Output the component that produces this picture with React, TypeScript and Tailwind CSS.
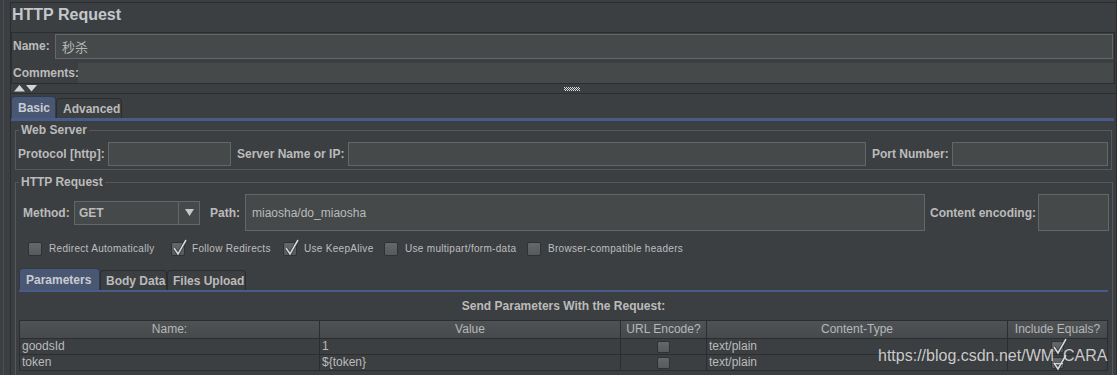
import React from "react";

type BoxProps = {
  checked?: boolean;
  small?: boolean;
};

const CheckBox = ({ checked, small }: BoxProps) => (
  <span
    className={
      small
        ? "relative inline-block h-[12px] w-[13px] shrink-0 rounded-[2px] border border-[#2f3133] bg-linear-to-b from-[#656869] to-[#575a5c]"
        : "relative inline-block h-[14px] w-[14px] shrink-0 rounded-[2px] border border-[#2f3133] bg-linear-to-b from-[#656869] to-[#575a5c]"
    }
  >
    {checked && (
      <svg
        className="absolute left-[-1px] top-[-5px]"
        width="17"
        height="18"
        viewBox="0 0 17 18"
      >
        <path d="M3 10 L7 16 L15 2" fill="none" stroke="#2b2d2f" strokeWidth="3" />
        <path d="M3 10 L7 16 L15 2" fill="none" stroke="#d8d8d8" strokeWidth="1.6" />
      </svg>
    )}
  </span>
);

const Field = ({ className, children }: { className?: string; children?: React.ReactNode }) => (
  <div className={"border border-[#646769] bg-[#45494a] " + (className ?? "")}>{children}</div>
);

const Option = ({ label, checked, width }: { label: string; checked?: boolean; width: string }) => (
  <div className={"flex items-center gap-[7px] " + width}>
    <CheckBox checked={checked} />
    <span className="text-[10px] leading-[14px] tracking-[0.3px] text-[#bcbec0]">{label}</span>
  </div>
);

const columns = ["Name:", "Value", "URL Encode?", "Content-Type", "Include Equals?"];
const rows = [
  { name: "goodsId", value: "1", type: "text/plain" },
  { name: "token", value: "${token}", type: "text/plain" },
];

export default function App() {
  return (
    <div className="relative flex h-[375px] w-[1117px] overflow-hidden bg-[#3c3f41] font-['Liberation_Sans',Arial,sans-serif] text-[#bbbbbb]">
      {/* left gutter */}
      <div className="flex w-[11px] shrink-0">
        <div className="w-[3px]" />
        <div className="w-px bg-[#4c4f51]" />
        <div className="w-[6px]" />
        <div className="mt-[2px] w-px bg-[#2b2d2f]" />
      </div>

      <div className="flex min-w-0 flex-1 flex-col border-r border-[#2b2d2f] [&>*]:shrink-0">
        <div className="mt-[2px] border-t border-[#2b2d2f]" />
        <div className="h-[29px] pl-px pt-[2px] text-[16px] font-bold leading-[20px] text-[#c4c8cc]">
          HTTP Request
        </div>

        {/* name / comments */}
        <div className="mr-px flex h-[52px] flex-col border border-[#2b2d2f]">
          <div className="flex h-[28px] shrink-0 items-start">
            <div className="w-[43px] pl-px pt-[6px] text-[12px] font-bold leading-[14px]">Name:</div>
            <Field className="mr-px mt-px flex h-[25px] flex-1 items-center pl-[6px]">
              <span className="font-['Noto_Sans_CJK_SC',sans-serif] text-[13px] leading-[16px] text-[#b5b5b5]">
                秒杀
              </span>
            </Field>
          </div>
          <div className="flex flex-1 items-stretch pt-[2px]">
            <div className="flex w-[66px] items-center pl-px text-[12px] font-bold leading-[14px]">Comments:</div>
            <div className="mr-px flex-1 bg-[#45494a]" />
          </div>
        </div>

        {/* splitter */}
        <div className="flex h-[10px] items-center border-b border-[#2b2d2f]">
          <svg className="ml-[3px]" width="24" height="7" viewBox="0 0 24 7">
            <polygon points="0,6.5 5.5,0 11,6.5" fill="#d4d4d4" />
            <polygon points="12,0 23,0 17.5,6.5" fill="#d4d4d4" />
          </svg>
          <svg className="ml-[526px]" width="16" height="4" viewBox="0 0 16 4">
            {Array.from({ length: 8 }).map((_, i) => (
              <React.Fragment key={i}>
                <rect x={i * 2} y={0} width="1" height="1" fill="#d8d8d8" />
                <rect x={i * 2 + 1} y={1} width="1" height="1" fill="#d8d8d8" />
                <rect x={i * 2} y={2} width="1" height="1" fill="#d8d8d8" />
                <rect x={i * 2 + 1} y={3} width="1" height="1" fill="#d8d8d8" />
              </React.Fragment>
            ))}
          </svg>
        </div>

        {/* main tabs */}
        <div className="flex h-[24px] items-end">
          <div className="flex h-[22px] w-[45px] items-center rounded-t-[4px] border border-b-0 border-[#2f3a50] bg-[#4a5773] pl-[6px] text-[12px] font-bold leading-[14px] text-[#c8ccd2]">
            Basic
          </div>
          <div className="flex h-[20px] w-[66px] items-center rounded-t-[4px] border border-b-0 border-[#2b2d2f] pl-[6px] text-[12px] font-bold leading-[14px]">
            Advanced
          </div>
        </div>
        <div className="mr-[2px] h-[3px] bg-[#485c88]" />

        {/* web server */}
        <fieldset className="mx-[4px] mt-[2px] border border-[#56595b]">
          <legend className="ml-[3px] px-[2px] text-[12px] font-bold leading-[14px]">Web Server</legend>
          <div className="mt-[5px] mb-[3px] flex h-[24px] items-stretch pl-[2px] pr-[3px]">
            <div className="flex w-[90px] items-center text-[12px] font-bold">Protocol [http]:</div>
            <Field className="w-[123px]" />
            <div className="ml-[6px] flex w-[111px] items-center text-[12px] font-bold">Server Name or IP:</div>
            <Field className="flex-1" />
            <div className="ml-[6px] flex w-[80px] items-center text-[12px] font-bold">Port Number:</div>
            <Field className="w-[156px]" />
          </div>
        </fieldset>

        {/* http request */}
        <fieldset className="mx-[4px] mt-[5px] border border-[#56595b] pb-[30px]">
          <legend className="ml-[3px] px-[2px] text-[12px] font-bold leading-[14px]">HTTP Request</legend>
          <div className="mt-[5px] flex h-[37px] items-center pl-[7px] pr-[3px]">
            <div className="w-[51px] text-[12px] font-bold">Method:</div>
            <Field className="flex h-[24px] w-[126px] items-stretch">
              <div className="flex flex-1 items-center pl-[4px] text-[12px] font-bold">GET</div>
              <div className="flex w-[21px] items-center justify-center border-l border-[#646769]">
                <svg width="9" height="7" viewBox="0 0 9 7">
                  <polygon points="0,0 9,0 4.5,7" fill="#c8c8c8" />
                </svg>
              </div>
            </Field>
            <div className="ml-[10px] w-[35px] text-[12px] font-bold">Path:</div>
            <Field className="flex h-[37px] flex-1 items-center pl-[6px]">
              <span className="text-[12px] text-[#bbbbbb]">miaosha/do_miaosha</span>
            </Field>
            <div className="ml-[5px] w-[108px] text-[12px] font-bold">Content encoding:</div>
            <Field className="h-[37px] w-[71px]" />
          </div>

          <div className="mt-[11px] flex h-[14px] items-center pl-[12px]">
            <Option label="Redirect Automatically" width="w-[143px]" />
            <Option label="Follow Redirects" checked width="w-[112px]" />
            <Option label="Use KeepAlive" checked width="w-[101px]" />
            <Option label="Use multipart/form-data" width="w-[143px]" />
            <Option label="Browser-compatible headers" width="w-[200px]" />
          </div>

          {/* parameter tabs */}
          <div className="mt-[10px] flex h-[24px] items-end pl-[3px]">
            <div className="flex h-[22px] w-[81px] items-center rounded-t-[4px] border border-b-0 border-[#2f3a50] bg-[#4a5773] pl-[6px] text-[12px] font-bold leading-[14px] text-[#c8ccd2]">
              Parameters
            </div>
            <div className="flex h-[20px] w-[67px] items-center rounded-t-[4px] border border-b-0 border-[#2b2d2f] pl-[5px] text-[12px] font-bold leading-[14px]">
              Body Data
            </div>
            <div className="flex h-[20px] w-[79px] items-center rounded-t-[4px] border border-b-0 border-[#2b2d2f] pl-[5px] text-[12px] font-bold leading-[14px]">
              Files Upload
            </div>
          </div>
          <div className="ml-[3px] mr-[4px] h-[2px] bg-[#485c88]" />

          <div className="ml-[3px] mr-[4px]">
            <div className="h-[28px] text-center text-[12px] font-bold leading-[28px]">
              Send Parameters With the Request:
            </div>
            <div className="grid grid-cols-[300px_301px_86px_301px_100px] border-l border-t border-[#2b2d2f] text-[12px]">
              {columns.map(c => (
                <div
                  key={c}
                  className="h-[18px] border-b border-r border-[#2b2d2f] bg-linear-to-b from-[#4f5254] to-[#474a4c] text-center leading-[17px] text-[#b5b7b9]"
                >
                  {c}
                </div>
              ))}
              {rows.map(r => (
                <React.Fragment key={r.name}>
                  <div className="h-[16px] border-b border-r border-[#2b2d2f] pl-[2px] leading-[15px]">{r.name}</div>
                  <div className="h-[16px] border-b border-r border-[#2b2d2f] pl-[2px] leading-[15px]">{r.value}</div>
                  <div className="flex h-[16px] items-center justify-center border-b border-r border-[#2b2d2f]">
                    <CheckBox small />
                  </div>
                  <div className="h-[16px] border-b border-r border-[#2b2d2f] pl-[2px] leading-[15px]">{r.type}</div>
                  <div className="flex h-[16px] items-center justify-center border-b border-r border-[#2b2d2f]">
                    <CheckBox small checked />
                  </div>
                </React.Fragment>
              ))}
            </div>
          </div>
        </fieldset>
      </div>

      {/* watermark */}
      <div className="absolute left-[878px] top-[347px] text-[16px] leading-[18px] text-[#dcdcdc]/90">
        https://blog.csdn.net/WM_CARA
      </div>
    </div>
  );
}
